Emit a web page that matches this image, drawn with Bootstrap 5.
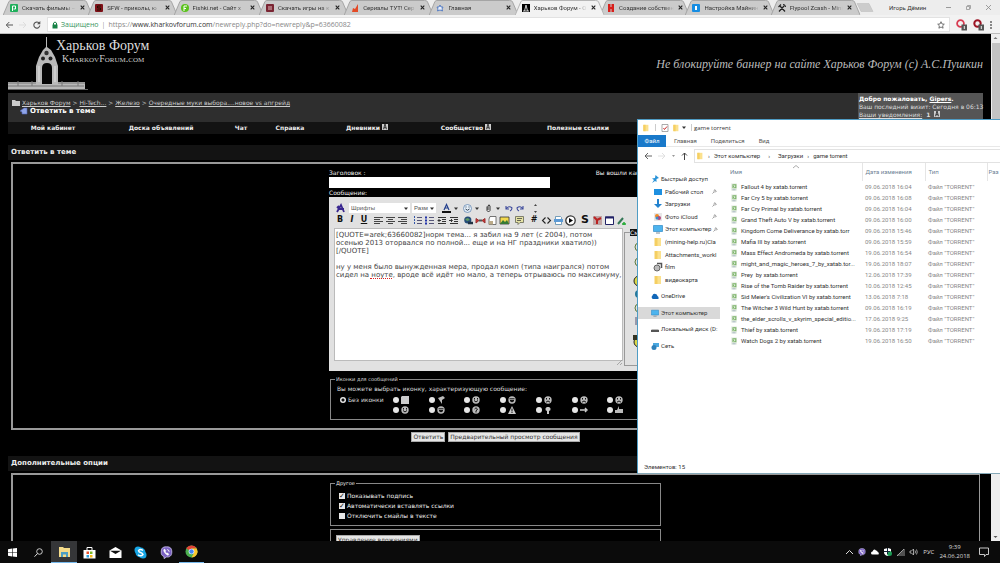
<!DOCTYPE html>
<html lang="ru">
<head>
<meta charset="utf-8">
<meta name="viewport" content="width=device-width, initial-scale=1">
<title>Харьков Форум - Ответить в теме</title>
<link href="https://cdn.jsdelivr.net/npm/bootstrap@5.3.0/dist/css/bootstrap.min.css" rel="stylesheet">
<style>
:root{--seg:"Open Sans","Noto Sans",sans-serif;--win:Roboto,"Noto Sans",sans-serif;--ver:"DejaVu Sans",sans-serif}
body{font-family:var(--ver);font-size:6px;line-height:8px;color:#eee;background:#000;overflow:hidden}
button,input,select,textarea{font:inherit;color:inherit;padding:0;margin:0;border:0;border-radius:0;background:none;line-height:inherit}
svg{display:block;flex:none;overflow:visible}
a{color:inherit}
.ic{width:8px;height:8px}
.ic10{width:10px;height:10px}
/* browser */
.tabstrip{height:15px;background:#ededed;padding-left:3px;font:6px/8px var(--win);color:#333}
.btab{position:relative;flex:1 1 0;min-width:0;padding:0 4px 0 7px;gap:4px;z-index:0}
.btab .shape{position:absolute;inset:0 -3px 0 0;width:calc(100% + 4px);height:15px;z-index:-1}
.btab .ttl{flex:1;white-space:nowrap;-webkit-mask-image:linear-gradient(90deg,#000 80%,transparent)}
.btab.on{z-index:1}
.strip-end{flex:0 0 144px;gap:15px;padding-right:9px}
.addr{height:19px;background:#f2f2f2;border-bottom:1px solid #bdbdbd;gap:6px;padding:2px 8px 1px 5px;font:7px/10px var(--seg);color:#555}
.omni{background:#fff;border:1px solid #e2e2e2;height:15px;padding:0 4px;gap:3px;flex:1}
.omni a{text-decoration:none;color:#888;flex:1}
.omni a b{font-weight:400;color:#333}
.secure{color:#3b9562}
/* forum */
.viewport{overflow:hidden;min-height:0}
.site{padding:0 8px;min-width:0;overflow:hidden}
.banner{height:59px}
.brand-text{margin-left:-32px}
.logo-a{font:14px/16px "Liberation Serif",serif;color:#ddd}
.logo-b{font:small-caps 10px/10px "Liberation Serif",serif;color:#ccc;padding-left:6px}
.script{font:italic 12px/16px "Liberation Serif",serif;color:#bbb}
.crumbs{background:#2e2e2e;height:29px;color:#ccc}
.crumbs .trail{padding:6px 0 0 4px}
.crumbs .trail>div{gap:2px}
.welcome{background:#555;width:125px;padding:2px 0 0 1px;color:#ddd;white-space:nowrap}
.mainnav{background:#131313;height:12px;font-weight:700;white-space:nowrap;display:grid;grid-template-columns:90fr 126fr 34fr 64fr 90fr 108fr 116fr 347fr;align-items:center}
.mainnav a{text-decoration:none;display:flex;justify-content:center;gap:2px}
.strip{background:#131313;height:15px;line-height:15px;font-size:7px;font-weight:700;padding-left:3px;margin:0}
.panel{border:2px solid #999;border-right-width:1px;margin:2px 3px 0}
.form-col{width:334px;margin:0 auto;padding-right:2px}
.fset{border:1px solid #888;position:relative;margin:0 0 0 1px}
.fset>legend{position:absolute;top:-5px;left:4px;width:auto;float:none;margin:0;padding:0 1px;font-size:5px;line-height:8px;background:#000;white-space:nowrap}
.subject{width:221px;height:11px;background:#fff;display:block;color:#000}
.editor{background:#e1e1e1;color:#111;height:174px;padding:5px}
.tool{height:12px}
.tool button{width:12px;height:12px;display:flex;align-items:center;justify-content:center;font-size:8px;line-height:10px}
.tool svg{width:9px;height:9px}
.tool .wide{width:21px;gap:3px}
.tool .caret{width:4px;height:3px}
.tool .sp{margin-left:3px}
.pick{position:relative;background:#fff}
.pick select{appearance:none;width:100%;height:10px;padding-left:2px;font-size:6px;line-height:10px;display:block;color:#555;font-family:"Liberation Sans",sans-serif}
.pick svg{position:absolute;right:2px;top:4px;width:4px;height:3px}
.msg{background:#fff;border:1px solid #bbb;height:133px;padding:2px 0 0 1px;font-size:7px;line-height:8px;color:#444;resize:none;overflow:hidden;display:block;width:100%;white-space:pre}
.misspell{position:absolute;left:36px;top:50px;width:22px;border-bottom:1px dotted #d22}
.grip{position:absolute;right:1px;bottom:1px}
.smiles{width:32px;height:134px;border:1px solid #999;padding:10px 8px}
.smiles legend{position:absolute;background:#111;color:#fff;font-size:6px;line-height:7px;width:auto;top:-4px;left:5px;margin:0;float:none}
.icons-set{height:41px;padding:5px 0 0 6px;color:#ddd}
.icon-grid{display:grid;grid-template-columns:53px repeat(7,1fr);row-gap:1px;padding:2px 17px 0 3px}
.icon-grid label{display:flex;align-items:center;gap:2px;height:9px;white-space:nowrap}
.opt{display:flex;align-items:center;gap:2px;height:10px}
input[type=radio]{appearance:none;width:6px;height:6px;border-radius:50%;background:#e6e6e6;flex:none}
input[type=radio]:checked{background:radial-gradient(#111 0 1px,#e6e6e6 2px)}
input[type=checkbox]{appearance:none;width:6px;height:6px;background:#e6e6e6;flex:none;position:relative}
input[type=checkbox]:checked::before{content:"✓";position:absolute;inset:0;color:#111;font:bold 7px/6px "DejaVu Sans",sans-serif}
.fbtn{background:#e6e6e6;color:#333;border:1px solid #aaa;height:10px;line-height:8px;padding:0 1px;white-space:nowrap}
.scroll{width:9px;background:#eee}
.scroll .thumb{background:#c3c3c3;margin:1px 0 0 1px;flex:0 0 300px}
/* explorer */
.explorer{position:absolute;left:63.7%;right:0;top:119px;height:355px;background:#fff;border:1px solid #4f9cc4;border-right:0;border-bottom:1px solid #86a9b8;color:#333;font:6px/8px var(--win);z-index:5;overflow:hidden}
.ex-title{height:15px;padding-left:4px;gap:5px;font-family:var(--seg)}
.ribbon{height:12px;border-bottom:1px solid #e8e8e8;color:#555}
.ribbon button{margin-right:14px}
.ribbon button.file{background:#1979ca;color:#fff;width:28px;height:12px;margin-right:8px}
.ex-path{height:15px;margin-top:1px;padding-left:6px;gap:6px}
.ex-path .box{border:1px solid #e2e2e2;border-right:0;flex:1;height:14px;gap:4px;padding-left:1px}
.ex-path a{text-decoration:none}
.tree{flex:0 0 82px;min-width:0;padding-top:10px;overflow:hidden;white-space:nowrap}
.tree a{display:flex;align-items:center;gap:2px;text-decoration:none;padding-left:13px;min-width:0}
.tree .quick{display:grid;grid-template-columns:minmax(0,1fr);grid-auto-rows:1fr;height:113px}
.tree .quick a+a{padding-left:15px;padding-right:3px}
.tree .quick span{flex:1}
.tree .roots{display:grid;grid-template-columns:minmax(0,1fr);grid-auto-rows:1fr;height:66px;margin-top:2px}
.tree .roots a{margin:2px 0}
.tree .sel{background:#d9d9d9}
.listing{padding-left:7px;min-width:0}
.sortmark{position:absolute;left:73px;top:2px}
.files{table-layout:fixed;width:100%;border-collapse:collapse}
.files th{font-weight:400;color:#6d7f95;height:18px;padding:0 0 0 3px;vertical-align:middle;white-space:nowrap;overflow:hidden;border-right:1px solid #e5e5e5}
.files th:last-child{border:0;padding-left:1px}
.files td{height:11px;padding:0 0 0 3px;white-space:nowrap;overflow:hidden;color:#888;vertical-align:middle}
.files td:first-child{color:#333}
.fname{display:flex;align-items:center;gap:3px}
.fname svg{width:8px;height:8px}
/* taskbar */
.taskbar{height:22px;background:#0b0b0b;font:6px/9px var(--seg);color:#ddd;padding-right:2px;z-index:6}
.app{width:26px;height:22px;display:flex;align-items:center;justify-content:center}
.app.slim{width:25px}
.app svg{width:13px;height:13px}
.app svg.sm{width:9px;height:9px}
.app.act{background:#353638;border-bottom:1px solid #76b9ed}
.app.run{border-bottom:1px solid #76b9ed}
.tray{gap:5px}
.bell{margin:0 9px 0 4px}
</style>
</head>
<body class="vh-100 d-flex flex-column position-relative">
<svg width="0" height="0" class="position-absolute">
<symbol id="tab" viewBox="0 0 90 15" preserveAspectRatio="none"><path d="M0 15.500L6 1.500Q7 .5 8 .5H81Q83 .5 84 1.500L90 15.500" fill="#cbcbcb" stroke="#a5a5a5"/></symbol>
<symbol id="tabon" viewBox="0 0 90 15" preserveAspectRatio="none"><path d="M0 15.500L6 1.500Q7 .5 8 .5H81Q83 .5 84 1.500L90 15.500" fill="#f2f2f2" stroke="#b5b5b5"/></symbol>
<symbol id="x" viewBox="0 0 5 5"><path d="M.7.7l3.600 3.600M4.300.7L.7 4.300" stroke="#222" stroke-width="1.100"/></symbol>
<symbol id="folder" viewBox="0 0 10 10"><path d="M2 1h6v8H2z" fill="#fbe18e"/><path d="M1.500 1h3v8h-3z" fill="#f5cf62"/></symbol>
<symbol id="doc" viewBox="0 0 10 10"><path d="M1.500 .5h7v9h-7z" fill="#e4ece2"/><path d="M3 1.500h5v5H3z" fill="#7fb56d"/><path d="M4.500 3l2 1-2 1.500" stroke="#fff" fill="none"/><path d="M3 8.500h4" stroke="#9ab"/></symbol>
<symbol id="pc" viewBox="0 0 10 10"><path d="M.5 1.500h9v6h-9z" fill="#4db4ee" stroke="#2f89c5" stroke-width=".7"/><path d="M3 9h4" stroke="#7a8b99"/></symbol>
<symbol id="pin" viewBox="0 0 6 6"><path d="M3 .5l2.500 2.500M3.500 1L2 2.500 3.500 4 5 2.500M2.500 3.500L.5 5.500" stroke="#777" stroke-width=".8" fill="none"/></symbol>
<symbol id="note" viewBox="0 0 8 8"><path d="M0 0h8v8H0z" fill="#ccc"/><path d="M4 0L2 7M4 0l2 7M2.500 5h3" stroke="#111" fill="none"/></symbol>
<symbol id="dn" viewBox="0 0 4 3"><path d="M0 .5h4L2 3z" fill="#333"/></symbol>
<symbol id="smile" viewBox="0 0 8 8"><circle cx="4" cy="4" r="3.700" fill="#bbb"/><path d="M2 4.500q2 3 4 0M2.500 2v1.500M5.500 2v1.500" stroke="#111" fill="none"/></symbol>
<symbol id="frown" viewBox="0 0 8 8"><circle cx="4" cy="4" r="3.700" fill="#bbb"/><path d="M2 6.200q2-2.500 4 0M2.500 2v1.500M5.500 2v1.500" stroke="#111" fill="none"/></symbol>
<symbol id="grin" viewBox="0 0 8 8"><circle cx="4" cy="4" r="3.700" fill="#bbb"/><path d="M2 4.500h4q-2 3-4 0M1.500 2.800h5" stroke="#111" fill="#111"/></symbol>
<symbol id="viber" viewBox="0 0 16 16"><path d="M8 1c5 0 6.500 2 6.500 6.500S12 14 8 13.500L5 15.500V13C2 12 1.500 10 1.500 7.500 1.500 3 3 1 8 1z" fill="#7b62c3" stroke="#cfc5f0"/><path d="M5 4q-1 1 0 3 1.500 3 4.500 4.500l1.500-1-1.500-2-1 .5Q7 8.500 6.500 7l.7-1L6 4zM8.500 4q3 .5 3 3.500" fill="#fff" stroke="#fff" stroke-width=".6"/></symbol>
</svg>

<header>
<div class="tabstrip d-flex align-items-stretch">
<div class="btab d-flex align-items-center"><svg class="shape"><use href="#tab"/></svg><svg class="ic" viewBox="0 0 8 8"><rect width="8" height="8" rx="1" fill="#1faf5b"/><path d="M2.500 7V2h3v3h-2" stroke="#fff" fill="none"/></svg><span class="ttl">Скачать фильмы –</span><svg width="5" height="5"><use href="#x"/></svg></div>
<div class="btab d-flex align-items-center"><svg class="shape"><use href="#tab"/></svg><svg class="ic" viewBox="0 0 8 8"><rect width="8" height="8" rx="1" fill="#7e1018"/><path d="M6 2H2.500v2h3v2H2" stroke="#210" fill="none"/></svg><span class="ttl">SFW - приколы, ю</span><svg width="5" height="5"><use href="#x"/></svg></div>
<div class="btab d-flex align-items-center"><svg class="shape"><use href="#tab"/></svg><svg class="ic" viewBox="0 0 8 8"><circle cx="4" cy="4" r="4" fill="#5bc21d"/><path d="M3 7V2h3M3 4.500h2" stroke="#fff" fill="none"/></svg><span class="ttl">Fishki.net - Сайт х</span><svg width="5" height="5"><use href="#x"/></svg></div>
<div class="btab d-flex align-items-center"><svg class="shape"><use href="#tab"/></svg><svg class="ic" viewBox="0 0 8 8"><rect width="8" height="8" rx="1" fill="#7a2533"/><path d="M2 3h4M2 5h4" stroke="#dbb"/></svg><span class="ttl">Скачать игры на к</span><svg width="5" height="5"><use href="#x"/></svg></div>
<div class="btab d-flex align-items-center"><svg class="shape"><use href="#tab"/></svg><svg class="ic" viewBox="0 0 8 8"><path d="M1 8L2 4l2 1 3-5v8z" fill="#e34a26"/></svg><span class="ttl">Сериалы ТУТ! Сер</span><svg width="5" height="5"><use href="#x"/></svg></div>
<div class="btab d-flex align-items-center"><svg class="shape"><use href="#tab"/></svg><svg class="ic" viewBox="0 0 8 8"><path d="M4 1l1 2h2L6 5l.5 2L4 6 1.500 7 2 5 1 3h2z" fill="#e7eefb" stroke="#4a74c0" stroke-width=".9"/></svg><span class="ttl">Главная</span><svg width="5" height="5"><use href="#x"/></svg></div>
<div class="btab on d-flex align-items-center"><svg class="shape"><use href="#tabon"/></svg><svg class="ic" viewBox="0 0 8 8"><path d="M0 0h8v8H0z"/><path d="M4 1L2.500 7M4 1l1.500 6M1 7h6" stroke="#ccc" fill="none"/></svg><span class="ttl">Харьков Форум - О</span><svg width="5" height="5"><use href="#x"/></svg></div>
<div class="btab d-flex align-items-center"><svg class="shape"><use href="#tab"/></svg><svg class="ic" viewBox="0 0 8 8"><path d="M1 0h2.500v3h1V0H7v8H4.500V5h-1v3H1z" fill="#d8201c"/></svg><span class="ttl">Создание собствен</span><svg width="5" height="5"><use href="#x"/></svg></div>
<div class="btab d-flex align-items-center"><svg class="shape"><use href="#tab"/></svg><svg class="ic" viewBox="0 0 8 8"><rect width="8" height="8" rx="1" fill="#168de2"/><path d="M3 2h2v4H3z" fill="#fff"/></svg><span class="ttl">Настройка Майнин</span><svg width="5" height="5"><use href="#x"/></svg></div>
<div class="btab d-flex align-items-center"><svg class="shape"><use href="#tab"/></svg><svg class="ic" viewBox="0 0 8 8"><path d="M1 7.500L6 2M7 7.500L2 2M.5 3L3 .5M5 .5q2 0 2.500 2.500" stroke="#222" stroke-width="1.200" fill="none"/></svg><span class="ttl">Flypool Zcash - Mini</span><svg width="5" height="5"><use href="#x"/></svg></div>
<div class="strip-end d-flex align-items-center"><svg width="18" height="9" viewBox="0 0 18 9"><path d="M1 .5h12l4 8H5z" fill="#ccc" stroke="#bbb" stroke-width=".5"/></svg><span class="text-nowrap me-auto">Игорь Дёмин</span><svg width="5" height="5"><path d="M0 2.500h5" stroke="#999"/></svg><svg width="5" height="5" viewBox="0 0 5 5"><path d="M.5 1.500h3v3h-3zM1.500 1V.5h3v3H4" stroke="#888" stroke-width=".7" fill="none"/></svg><svg width="5" height="5" viewBox="0 0 5 5"><path d="M0 0l5 5M5 0L0 5" stroke="#888" stroke-width=".8"/></svg></div>
</div>
<div class="addr d-flex align-items-center">
<svg class="ic" viewBox="0 0 8 8"><path d="M8 4H1.500M4.300 1L1.300 4l3 3" stroke="#555" fill="none"/></svg>
<svg class="ic" viewBox="0 0 8 8"><path d="M0 4h6.500M4 1l3 3-3 3" stroke="#ddd" fill="none"/></svg>
<svg class="ic" viewBox="0 0 8 8"><path d="M6.800 4.500A3 3 0 1 1 6 2" stroke="#555" fill="none" stroke-width="1.100"/><path d="M7.300 0v3.300H4z" fill="#555"/></svg>
<div class="omni d-flex align-items-center"><svg width="6" height="8" viewBox="0 0 6 8"><path d="M.5 3.500h5v4h-5z" fill="#178246"/><path d="M1.500 4V2q1.500-2 3 0v2" stroke="#178246" fill="none"/></svg><span class="secure">Защищено</span><span class="text-black-50">|</span><a href="#">https://<b>www.kharkovforum.com</b>/newreply.php?do=newreply&amp;p=63660082</a><svg class="ic" viewBox="0 0 8 8"><path d="M4 .7l1 2.300 2.300.2-1.700 1.600.5 2.400L4 6 1.900 7.200l.5-2.400L.7 3.200 3 3z" stroke="#555" fill="none" stroke-width=".8"/></svg></div>
<svg width="11" height="12" viewBox="0 0 11 12"><circle cx="4.500" cy="4.500" r="3.400" stroke="#d83c52" stroke-width="1.800" fill="none"/><rect x="5.500" y="5.500" width="5.500" height="6" fill="#555"/><path d="M8.300 7v3" stroke="#eee"/></svg>
<svg width="11" height="12" viewBox="0 0 11 12"><circle cx="4.500" cy="4.500" r="3.200" stroke="#9c1525" stroke-width="2" fill="none"/><rect x="5.500" y="5.500" width="5.500" height="6" fill="#555"/><path d="M8.300 7v3" stroke="#eee"/></svg>
<svg width="2" height="8" viewBox="0 0 2 8"><path d="M1 0v2M1 3v2M1 6v2" stroke="#666" stroke-width="1.500"/></svg>
</div>
</header>

<div class="viewport d-flex flex-fill">
<main class="site flex-fill">
<div class="banner d-flex">
<svg width="80" height="57" viewBox="0 0 80 57"><path d="M0 48h28V32l3-9 4-7 3-3V3h1v10l4 3 4 7 3 9v16h27v8H0z" fill="#b9b9b9"/><path d="M34 50V34q0-5 5-5t5 5v16z" fill="#050505"/><circle cx="38.500" cy="19" r="2.200" fill="#333"/><circle cx="35" cy="24.500" r="2" fill="#222"/><circle cx="42.500" cy="24.500" r="2" fill="#222"/><path d="M0 52h76M0 49h28M50 49h27M10 47v5M24 47v5M54 47v5M70 47v5" stroke="#777" fill="none"/><path d="M31 32v16M47 32v16" stroke="#e2e2e2"/><path d="M0 55.500h80" stroke="#666"/></svg>
<div class="brand-text position-relative"><div class="logo-a mt-1">Харьков Форум</div><div class="logo-b">KharkovForum.com</div></div>
<div class="script ms-auto align-self-center text-nowrap">Не блокируйте баннер на сайте Харьков Форум (с) А.С.Пушкин</div>
</div>
<div class="crumbs d-flex justify-content-between">
<div class="trail"><div class="d-flex"><svg class="ic" viewBox="0 0 8 8"><path d="M0 1h3l1 1h4v5H0z" fill="#ccc"/></svg><nav><a href="#">Харьков Форум</a> &gt; <a href="#">Hi-Tech...</a> &gt; <a href="#">Железо</a> &gt; <a href="#">Очередные муки выбора....новое vs апгрейд</a></nav></div>
<div class="d-flex ps-2"><svg class="ic" viewBox="0 0 8 8"><path d="M0 4l4-3h3v6H2V5z" fill="#8fa4e8" stroke="#5064b8" stroke-width=".6"/></svg><b style="font-size:7px" class="text-white">Ответить в теме</b></div></div>
<div class="welcome"><div><b class="text-white">Добро пожаловать, <a href="#">Gipers</a>.</b></div><div>Ваш последний визит: Сегодня в 06:13</div><div class="d-flex gap-1"><a href="#">Ваши уведомления:</a><b>1</b><svg width="6" height="6"><use href="#note"/></svg></div></div>
</div>
<nav class="mainnav">
<a href="#">Мой кабинет</a><a href="#">Доска объявлений</a><a href="#">Чат</a><a href="#">Справка</a><a href="#">Дневники <svg width="6" height="6"><use href="#note"/></svg></a><a href="#">Сообщество <svg width="6" height="6"><use href="#note"/></svg></a><a href="#">Полезные ссылки</a>
</nav>
<h1 class="strip" style="margin-top:11px">Ответить в теме</h1>
<form class="panel" style="height:268px">
<div class="form-col">
<div class="d-flex justify-content-between" style="padding-top:5px"><label for="subj">Заголовок :</label><span>Вы вошли как Gipers</span></div>
<input id="subj" class="subject" type="text">
<label for="msg" class="d-block" style="margin-top:1px">Сообщение:</label>
<div class="editor">
<div class="tool d-flex align-items-center">
<button type="button"><svg viewBox="0 0 9 9"><path d="M1 8L5 1l3 7M3 5h5M1 4l2-2" stroke="#3a2790" stroke-width="1.800" fill="none"/></svg></button>
<div class="pick" style="width:61px;margin:0 2px 0 3px"><select aria-label="Шрифты"><option>Шрифты</option></select><svg><use href="#dn"/></svg></div>
<div class="pick" style="width:24px;margin-right:3px"><select aria-label="Размер"><option>Разм</option></select><svg><use href="#dn"/></svg></div>
<button type="button" class="wide"><svg viewBox="0 0 9 9"><path d="M2 6L4.500.5 7 6M3 4h3" stroke="#24408e" stroke-width="1.200" fill="none"/><path d="M0 8h9" stroke="#111" stroke-width="2"/></svg><svg class="caret"><use href="#dn"/></svg></button>
<button type="button" class="wide"><svg viewBox="0 0 9 9"><circle cx="4.500" cy="4.500" r="4" fill="#e6f0fa" stroke="#6488b0" stroke-width=".8"/><path d="M2.500 5q2 2.500 4 0M3 2.500v1M6 2.500v1" stroke="#345" fill="none"/></svg><svg class="caret"><use href="#dn"/></svg></button>
<button type="button" class="wide"><svg viewBox="0 0 9 9"><path d="M3 2.500v4q1.500 3 3 0V2Q5-.5 4 2v4" stroke="#333" fill="none"/></svg><svg class="caret"><use href="#dn"/></svg></button>
<button type="button"><svg viewBox="0 0 9 9"><path d="M2 2v3h3M2 5q3-4 6-1 0 2-2 3" stroke="#3d4a9c" stroke-width="1.100" fill="none"/></svg></button>
<button type="button"><svg viewBox="0 0 9 9"><path d="M7 2v3H4M7 5Q4 1 1 4q0 2 2 3" stroke="#3d4a9c" stroke-width="1.100" fill="none"/></svg></button>
<button type="button" class="sp"><svg viewBox="0 0 9 9"><path d="M4.500 0l1.500 2H3zM4.500 9L3 7h3z" fill="#444"/></svg></button>
</div>
<div class="tool d-flex align-items-center">
<button type="button"><b>B</b></button><button type="button"><b><i>I</i></b></button><button type="button"><b><u>U</u></b></button>
<button type="button" style="margin-left:2px"><svg viewBox="0 0 9 9"><path d="M0 1.500h9M0 3.500h6M0 5.500h9M0 7.500h6" stroke="#444"/></svg></button><button type="button"><svg viewBox="0 0 9 9"><path d="M0 1.500h9M2 3.500h5M0 5.500h9M2 7.500h5" stroke="#444"/></svg></button><button type="button"><svg viewBox="0 0 9 9"><path d="M0 1.500h9M3 3.500h6M0 5.500h9M3 7.500h6" stroke="#444"/></svg></button>
<button type="button" class="sp"><svg viewBox="0 0 9 9"><path d="M4 1.500h5M4 4.500h5M4 7.500h5" stroke="#557"/><path d="M1.500 0v9" stroke="#35a" stroke-dasharray="2 1"/></svg></button><button type="button"><svg viewBox="0 0 9 9"><path d="M4 1.500h5M4 4.500h5M4 7.500h5" stroke="#557"/><path d="M0 1.500h2M0 4.500h2M0 7.500h2" stroke="#23a" stroke-width="1.800"/></svg></button><button type="button"><svg viewBox="0 0 9 9"><path d="M1 1.500h8M5 3.500h4M5 5.500h4M1 7.500h8M4 4.500H1M2.500 3L1 4.500 2.500 6" stroke="#333" fill="none"/></svg></button><button type="button"><svg viewBox="0 0 9 9"><path d="M1 1.500h8M5 3.500h4M5 5.500h4M1 7.500h8M0 4.500h3M2 3l1.500 1.500L2 6" stroke="#333" fill="none"/></svg></button>
<button type="button" class="sp"><svg viewBox="0 0 9 9"><circle cx="3.800" cy="4" r="3.600" fill="#254d78"/><path d="M1 3l3-1 2 2-3 1" fill="#5f9b62"/><path d="M4 7h5" stroke="#234" stroke-width="2.500"/></svg></button><button type="button"><svg viewBox="0 0 9 9"><path d="M0 2.500l3 2L0 7zM9 2.500l-3 2L9 7z" fill="#c33" stroke="#933"/><path d="M3 4.500h3" stroke="#555" stroke-width="2"/></svg></button><button type="button"><svg viewBox="0 0 9 9"><path d="M2 .5h6v8H1V3z" fill="#fff" stroke="#555" stroke-width=".8"/><path d="M1 5h4v3.500H1z" fill="#ba8"/></svg></button><button type="button"><svg viewBox="0 0 9 9"><path d="M0 1h9v7H0z" fill="#f3d94e" stroke="#333" stroke-width=".8"/><path d="M0 8l3-4 2 2 2-2 2 4z" fill="#357a35"/></svg></button>
<button type="button" class="sp"><svg viewBox="0 0 9 9"><path d="M.5.5h8v6H5l-2 2v-2H.5z" fill="#e5e3a5" stroke="#665" stroke-width=".8"/><path d="M2 2.500h5M2 4.500h4" stroke="#665"/></svg></button>
<button type="button" class="sp"><b>#</b></button><button type="button"><svg viewBox="0 0 9 9"><path d="M3.500 1.500L.5 4.500l3 3M5.500 1.500l3 3-3 3" stroke="#222" stroke-width="1.100" fill="none"/></svg></button><button type="button"><svg viewBox="0 0 9 9"><path d="M1.500.5h5l1 1v7h-6z" fill="#fff" stroke="#58a" stroke-width=".8"/><path d="M0 3h9v3H0z" fill="#5c9ad5"/></svg></button><button type="button"><svg style="width:11px;height:11px" viewBox="0 0 11 11"><circle cx="5.500" cy="5.500" r="4.700" fill="#fff" stroke="#333" stroke-width="1.300"/><path d="M4 3l4 2.500L4 8z"/></svg></button>
<button type="button" class="sp"><b style="font-size:11px">S</b></button><button type="button"><svg viewBox="0 0 9 9"><path d="M0 0h9v9H0z" fill="#bfa5a5"/><path d="M1 1l3 3v4M4 4l4-2" stroke="#b22" stroke-width="2" fill="none"/></svg></button><button type="button"><svg viewBox="0 0 9 9"><path d="M.5 1h8v7.500h-8z" fill="#fff" stroke="#226"/><path d="M0 1.500h9" stroke="#226" stroke-width="2"/></svg></button><button type="button"><svg viewBox="0 0 9 9"><path d="M1 8l5-6" stroke="#375" stroke-width="2"/><path d="M5 8h4M7 6v3" stroke="#2a3" stroke-width="1.500"/></svg></button>
</div>
<div class="d-flex" style="gap:1px;margin-top:2px">
<div class="position-relative flex-fill"><textarea id="msg" class="msg" spellcheck="false">[QUOTE=arek;63660082]норм тема... я забил на 9 лет (с 2004), потом
осенью 2013 оторвался по полной... еще и на НГ праздники хватило))
[/QUOTE]

ну у меня было вынужденная мера, продал комп (типа наигрался) потом
сидел на ноуте, вроде всё идёт но мало, а теперь отрываюсь по максимуму,</textarea><span class="misspell"></span>
<svg class="grip" width="5" height="5"><path d="M5 0L0 5M5 3L3 5" stroke="#999" stroke-width=".8"/></svg></div>
<fieldset class="smiles position-relative mt-1"><legend>Смайлы</legend>
<svg width="12" height="110" viewBox="0 0 12 110"><g fill="#dcd84a" stroke="#222"><circle cx="6" cy="38" r="5"/><circle cx="6" cy="99" r="5"/></g><g fill="#e1e1e1" stroke="#5c7a3c"><circle cx="6" cy="4" r="4"/><circle cx="6" cy="19" r="4"/><circle cx="6" cy="65" r="4"/></g><circle cx="6" cy="51" r="4" fill="#26789a"/><path d="M2 74h8v8H2z" fill="#99a"/><path d="M0 92h12v5H0z" fill="#332"/></svg></fieldset>
</div>
</div>
<fieldset class="fset icons-set" style="margin-top:8px"><legend>Иконки для сообщений</legend>
<div>Вы можете выбрать иконку, характеризующую сообщение:</div>
<div class="icon-grid">
<label><input type="radio" name="ic" checked>Без иконки</label>
<label><input type="radio" name="ic"><svg class="ic" viewBox="0 0 8 8"><path d="M1 0h7v8H0V1z" fill="#ccc"/></svg></label>
<label><input type="radio" name="ic"><svg class="ic" viewBox="0 0 8 8"><path d="M1 2l5-2 2 2-3 2v4L3 5z" fill="#bbb"/></svg></label>
<label><input type="radio" name="ic"><svg class="ic"><use href="#smile"/></svg></label>
<label><input type="radio" name="ic"><svg class="ic"><use href="#grin"/></svg></label>
<label><input type="radio" name="ic"><svg class="ic"><use href="#frown"/></svg></label>
<label><input type="radio" name="ic"><svg class="ic"><use href="#frown"/></svg></label>
<label><input type="radio" name="ic"><svg class="ic"><use href="#frown"/></svg></label>
<span></span>
<label><input type="radio" name="ic"><svg class="ic"><use href="#smile"/></svg></label>
<label><input type="radio" name="ic"><svg class="ic"><use href="#grin"/></svg></label>
<label><input type="radio" name="ic"><svg class="ic" viewBox="0 0 8 8"><circle cx="4" cy="4" r="3.700" fill="#bbb"/><path d="M2.500 3Q4 .5 5.500 3L4 5v1.500" stroke="#111" fill="none"/></svg></label>
<label><input type="radio" name="ic"><svg class="ic" viewBox="0 0 8 8"><path d="M4 0l4 8H0z" fill="#ccc"/><path d="M4 2.500v3M4 6v1" stroke="#111"/></svg></label>
<label><input type="radio" name="ic"><svg class="ic" viewBox="0 0 8 8"><path d="M4 1a2 2 0 0 1 1 4v3H3V5a2 2 0 0 1 1-4z" fill="#ccc"/></svg></label>
<label><input type="radio" name="ic"><svg class="ic" viewBox="0 0 8 8"><path d="M0 4h6M5 2l2 2-2 2" stroke="#ccc" fill="none" stroke-width="1.400"/></svg></label>
<label><input type="radio" name="ic"><svg class="ic" viewBox="0 0 8 8"><path d="M0 4h2l2-4v3h4v4H0z" fill="#bbb"/></svg></label>
</div></fieldset>
</div>
</form>
<div class="d-flex justify-content-center" style="gap:3px;padding:2px 0 14px"><button type="button" class="fbtn">Ответить</button><button type="button" class="fbtn">Предварительный просмотр сообщения</button></div>
<h2 class="strip">Дополнительные опции</h2>
<section class="panel" style="height:120px">
<div class="form-col" style="padding-top:8px">
<fieldset class="fset" style="height:43px;padding:7px 0 0 8px"><legend>Другое</legend>
<label class="opt"><input type="checkbox" checked>Показывать подпись</label>
<label class="opt"><input type="checkbox" checked>Автоматически вставлять ссылки</label>
<label class="opt"><input type="checkbox">Отключить смайлы в тексте</label>
</fieldset>
<div class="fset" style="height:40px;margin-top:3px;padding:5px"><button type="button" class="fbtn">Управление вложениями</button></div>
</div></section>
</main>
<div class="scroll d-flex flex-column align-items-stretch">
<svg width="9" height="8"><path d="M2.500 5l2-2 2 2z" fill="#777"/></svg><div class="thumb"></div><svg class="mt-auto" width="9" height="8"><path d="M2.500 3l2 2 2-2z" fill="#555"/></svg></div>
</div>

<section class="explorer d-flex flex-column">
<div class="ex-title d-flex align-items-center"><svg class="ic"><use href="#folder"/></svg><svg width="1" height="7"><path d="M.5 0v7" stroke="#ccc"/></svg><svg class="ic" viewBox="0 0 8 8"><path d="M1 .5h6v7H1z" fill="#fff" stroke="#888" stroke-width=".7"/><path d="M2.500 4l1 1.500L6 2.500" stroke="#c33" fill="none"/></svg><svg class="ic" style="margin-left:-2px"><use href="#folder"/></svg><svg width="4" height="3" style="margin-left:-3px"><use href="#dn"/></svg><svg width="1" height="7" style="margin-right:-3px"><path d="M.5 0v7" stroke="#ccc"/></svg><span>game torrent</span></div>
<div class="ribbon d-flex align-items-center"><button class="file">Файл</button><button>Главная</button><button>Поделиться</button><button>Вид</button></div>
<div class="ex-path d-flex align-items-center"><svg class="ic" viewBox="0 0 8 8"><path d="M8 4H1M4 1L1 4l3 3" stroke="#555" fill="none" stroke-width=".9"/></svg><svg class="ic" viewBox="0 0 8 8"><path d="M0 4h7M4 1l3 3-3 3" stroke="#ddd" fill="none" stroke-width=".9"/></svg><svg width="3" height="2"><path d="M0 0l1.500 2L3 0" fill="#999"/></svg><svg width="7" height="8" viewBox="0 0 7 8"><path d="M3.500 8V1M1 3.500L3.500 1 6 3.500" stroke="#444" fill="none"/></svg>
<div class="box d-flex align-items-center"><svg class="ic"><use href="#folder"/></svg><span>›</span><a href="#">Этот компьютер</a><span class="px-1">›</span><a href="#">Загрузки</a><span>›</span><a href="#">game torrent</a></div></div>
<div class="d-flex flex-fill">
<nav class="tree">
<div class="quick">
<a href="#"><svg class="ic" viewBox="0 0 8 8"><path d="M4.500 0L8 3 5.500 4l0 3L4 6 1 8l2-3-2-1.500L4 3z" fill="#2a93d8"/></svg><span>Быстрый доступ</span></a>
<a href="#"><svg class="ic10" viewBox="0 0 10 10"><path d="M1 2h8v6H1z" fill="#1d8fe0"/></svg><span>Рабочий стол</span><svg width="5" height="5"><use href="#pin"/></svg></a>
<a href="#"><svg class="ic10" viewBox="0 0 10 10"><path d="M4 0h2v5h3L5 9 1 5h3z" fill="#2383d0"/></svg><span>Загрузки</span><svg width="5" height="5"><use href="#pin"/></svg></a>
<a href="#"><svg class="ic10" viewBox="0 0 10 10"><path d="M1 1h8v8H1z" fill="#e8e8e8"/><circle cx="4" cy="4" r="2" fill="#f08a24"/><circle cx="6" cy="6" r="2" fill="#b3457a"/><circle cx="4" cy="6" r="1.500" fill="#3d8dc8"/></svg><span>Фото iCloud</span><svg width="5" height="5"><use href="#pin"/></svg></a>
<a href="#"><svg class="ic10"><use href="#pc"/></svg><span>Этот компьютер</span><svg width="5" height="5"><use href="#pin"/></svg></a>
<a href="#"><svg class="ic10"><use href="#folder"/></svg><span>(mining-help.ru)Cla</span></a>
<a href="#"><svg class="ic10"><use href="#folder"/></svg><span>Attachments_workl</span></a>
<a href="#"><svg class="ic10" viewBox="0 0 10 10"><circle cx="4" cy="6" r="3" fill="#bbb" stroke="#666"/><path d="M4 1.500h4.500V6" stroke="#555" fill="none" stroke-width="1.500"/></svg><span>film</span></a>
<a href="#"><svg class="ic10"><use href="#folder"/></svg><span>видеокарта</span></a>
</div>
<div class="roots">
<a href="#"><svg class="ic" viewBox="0 0 8 8"><path d="M2 7a2 2 0 0 1-.5-3.500Q2 1 4.500 2 6 2 6.500 4 8 4.500 7.500 7z" fill="#1267b8"/></svg><span>OneDrive</span></a>
<a href="#" class="sel"><svg class="ic"><use href="#pc"/></svg><span>Этот компьютер</span></a>
<a href="#"><svg class="ic" viewBox="0 0 8 8"><path d="M0 5h8v2H0z" fill="#555"/><path d="M1 4h6l1 1H0z" fill="#bbb"/></svg><span>Локальный диск (D:</span></a>
<a href="#"><svg class="ic" viewBox="0 0 8 8"><path d="M2 1h6v4H2z" fill="#4aa8e0"/><circle cx="3" cy="5.500" r="2.500" fill="#2f81ba"/></svg><span>Сеть</span></a>
</div></nav>
<div class="listing flex-fill position-relative">
<svg class="sortmark" width="6" height="3"><path d="M0 3l3-2.500L6 3" stroke="#888" fill="none" stroke-width=".7"/></svg>
<table class="files"><colgroup><col style="width:135px"><col style="width:63px"><col style="width:62px"><col></colgroup>
<thead><tr><th>Имя</th><th>Дата изменения</th><th>Тип</th><th>Раз</th></tr></thead>
<tbody>
<tr><td><div class="fname"><svg><use href="#doc"/></svg>Fallout 4 by xatab.torrent</div></td><td>09.06.2018 16:04</td><td>Файл "TORRENT"</td><td></td></tr>
<tr><td><div class="fname"><svg><use href="#doc"/></svg>Far Cry 5 by xatab.torrent</div></td><td>09.06.2018 16:08</td><td>Файл "TORRENT"</td><td></td></tr>
<tr><td><div class="fname"><svg><use href="#doc"/></svg>Far Cry Primal by xatab.torrent</div></td><td>09.06.2018 16:04</td><td>Файл "TORRENT"</td><td></td></tr>
<tr><td><div class="fname"><svg><use href="#doc"/></svg>Grand Theft Auto V by xatab.torrent</div></td><td>09.06.2018 16:00</td><td>Файл "TORRENT"</td><td></td></tr>
<tr><td><div class="fname"><svg><use href="#doc"/></svg>Kingdom Come Deliverance by xatab.torr</div></td><td>09.06.2018 15:46</td><td>Файл "TORRENT"</td><td></td></tr>
<tr><td><div class="fname"><svg><use href="#doc"/></svg>Mafia III by xatab.torrent</div></td><td>09.06.2018 15:59</td><td>Файл "TORRENT"</td><td></td></tr>
<tr><td><div class="fname"><svg><use href="#doc"/></svg>Mass Effect Andromeda by xatab.torrent</div></td><td>19.06.2018 16:54</td><td>Файл "TORRENT"</td><td></td></tr>
<tr><td><div class="fname"><svg><use href="#doc"/></svg>might_and_magic_heroes_7_by_xatab.tor...</div></td><td>19.06.2018 18:07</td><td>Файл "TORRENT"</td><td></td></tr>
<tr><td><div class="fname"><svg><use href="#doc"/></svg>Prey &nbsp;by xatab.torrent</div></td><td>12.06.2018 17:39</td><td>Файл "TORRENT"</td><td></td></tr>
<tr><td><div class="fname"><svg><use href="#doc"/></svg>Rise of the Tomb Raider by xatab.torrent</div></td><td>10.06.2018 12:45</td><td>Файл "TORRENT"</td><td></td></tr>
<tr><td><div class="fname"><svg><use href="#doc"/></svg>Sid Meier's Civilization VI by xatab.torrent</div></td><td>13.06.2018 7:18</td><td>Файл "TORRENT"</td><td></td></tr>
<tr><td><div class="fname"><svg><use href="#doc"/></svg>The Witcher 3 Wild Hunt by xatab.torrent</div></td><td>09.06.2018 16:19</td><td>Файл "TORRENT"</td><td></td></tr>
<tr><td><div class="fname"><svg><use href="#doc"/></svg>the_elder_scrolls_v_skyrim_special_editio...</div></td><td>17.06.2018 9:25</td><td>Файл "TORRENT"</td><td></td></tr>
<tr><td><div class="fname"><svg><use href="#doc"/></svg>Thief by xatab.torrent</div></td><td>19.06.2018 17:19</td><td>Файл "TORRENT"</td><td></td></tr>
<tr><td><div class="fname"><svg><use href="#doc"/></svg>Watch Dogs 2 by xatab.torrent</div></td><td>19.06.2018 16:50</td><td>Файл "TORRENT"</td><td></td></tr>
</tbody></table></div>
</div>
<div style="padding:0 0 2px 6px">Элементов: 15</div>
</section>

<footer class="taskbar d-flex align-items-center justify-content-between">
<div class="d-flex">
<button class="app slim" aria-label="Пуск"><svg class="sm" viewBox="0 0 9 9"><path d="M0 1.200l4-.6v3.600H0zM4.600.5L9 0v4.200H4.600zM0 4.800h4v3.600l-4-.6zM4.600 4.800H9V9l-4.400-.5z" fill="#fff"/></svg></button>
<button class="app" aria-label="Поиск"><svg class="sm" viewBox="0 0 9 9"><circle cx="5.500" cy="3.500" r="2.800" stroke="#ddd" fill="none" stroke-width=".9"/><path d="M3.500 5.500L.5 8.700" stroke="#ddd"/></svg></button>
<button class="app act" aria-label="Проводник"><svg viewBox="0 0 13 13"><path d="M1 2h4l1 1h6v9H1z" fill="#f5dc8a"/><path d="M3 7h7v5H8V9.500H5V12H3z" fill="#4c9fc4"/></svg></button>
<button class="app slim" aria-label="Магазин"><svg viewBox="0 0 13 13"><path d="M.5 4h12v8.500H.5z" fill="#fff"/><path d="M4 4V1.500h5V4" stroke="#fff" fill="none"/><path d="M3.500 5.500h2.500V8H3.500z" fill="#e8502c"/><path d="M7 5.500h2.500V8H7z" fill="#7db928"/><path d="M3.500 9h2.500v2.500H3.500z" fill="#2a9fe0"/><path d="M7 9h2.500v2.500H7z" fill="#f7b91c"/></svg></button>
<button class="app" aria-label="Почта"><svg viewBox="0 0 13 13"><path d="M.5 4.500L6.500 1l6 3.500v7.500H.5z" fill="#fff"/><path d="M1 4.800h11L6.500 8z" fill="#111"/></svg></button>
<button class="app slim" aria-label="Skype"><svg viewBox="0 0 13 13"><circle cx="6.500" cy="6.500" r="5" fill="#17a6e5"/><circle cx="4" cy="4" r="3.500" fill="#17a6e5"/><circle cx="9" cy="9" r="3.500" fill="#17a6e5"/><path d="M9 4.500Q6.500 2.500 4.500 4.500q0 1.500 2 2t2.500 2Q7 11 4 8.700" stroke="#fff" stroke-width="1.400" fill="none"/></svg></button>
<button class="app" aria-label="Viber"><svg><use href="#viber"/></svg></button>
<button class="app run slim" aria-label="Chrome"><svg viewBox="0 0 13 13"><circle cx="6.500" cy="6.500" r="6" fill="#4caf50"/><path d="M6.500 6.500L1.300 3.500A6 6 0 0 1 11.700 3.500H6.500z" fill="#e24436"/><path d="M6.500 3.500h5.200A6 6 0 0 1 6.500 12.500L9 8z" fill="#fbc62e"/><circle cx="6.500" cy="6.500" r="2.800" fill="#fff"/><circle cx="6.500" cy="6.500" r="2.200" fill="#4285f4"/></svg></button>
</div>
<div class="tray d-flex align-items-center">
<svg width="7" height="4"><path d="M0 4l3.500-3.500L7 4" stroke="#ddd" fill="none"/></svg><svg class="ic"><use href="#viber"/></svg>
<svg class="ic" viewBox="0 0 8 8"><path d="M1.500 6.500a1.500 1.500 0 0 1 0-3Q3 0 5 2.500q2 0 1.500 1.500 2 .5 1 2.500z" fill="#fff"/></svg>
<svg class="ic" viewBox="0 0 8 8"><path d="M0 1l4-1 3 1v3q0 3-3.500 4Q0 7 0 4z" fill="#fff"/><circle cx="5.500" cy="5.500" r="2.500" fill="#1b9b55"/><path d="M3.500 0v6M0 3.500h6" stroke="#123"/></svg>
<svg class="ic" viewBox="0 0 8 8"><path d="M1 8V6.500M3 8V5M5 8V3M7 8V1M0 8L7 1" stroke="#bbb" stroke-width=".8"/></svg>
<svg class="ic" viewBox="0 0 8 8"><path d="M0 3h1.500L3.500 1v6l-2-2H0zM5 2.500q1 1.500 0 3M6.500 1.500q1.500 2.500 0 5" stroke="#ddd" stroke-width=".7" fill="none"/></svg>
<span>РУС</span><div class="text-center"><div>9:39</div><div>24.06.2018</div></div><svg class="bell" width="10" height="10" viewBox="0 0 10 10"><path d="M.5 1h9v6.500H7L5.500 9.500V7.500h-5z" stroke="#ddd" fill="none" stroke-width=".9"/></svg></div>
</footer>
<script src="https://cdn.jsdelivr.net/npm/bootstrap@5.3.0/dist/js/bootstrap.bundle.min.js"></script>
</body>
</html>
